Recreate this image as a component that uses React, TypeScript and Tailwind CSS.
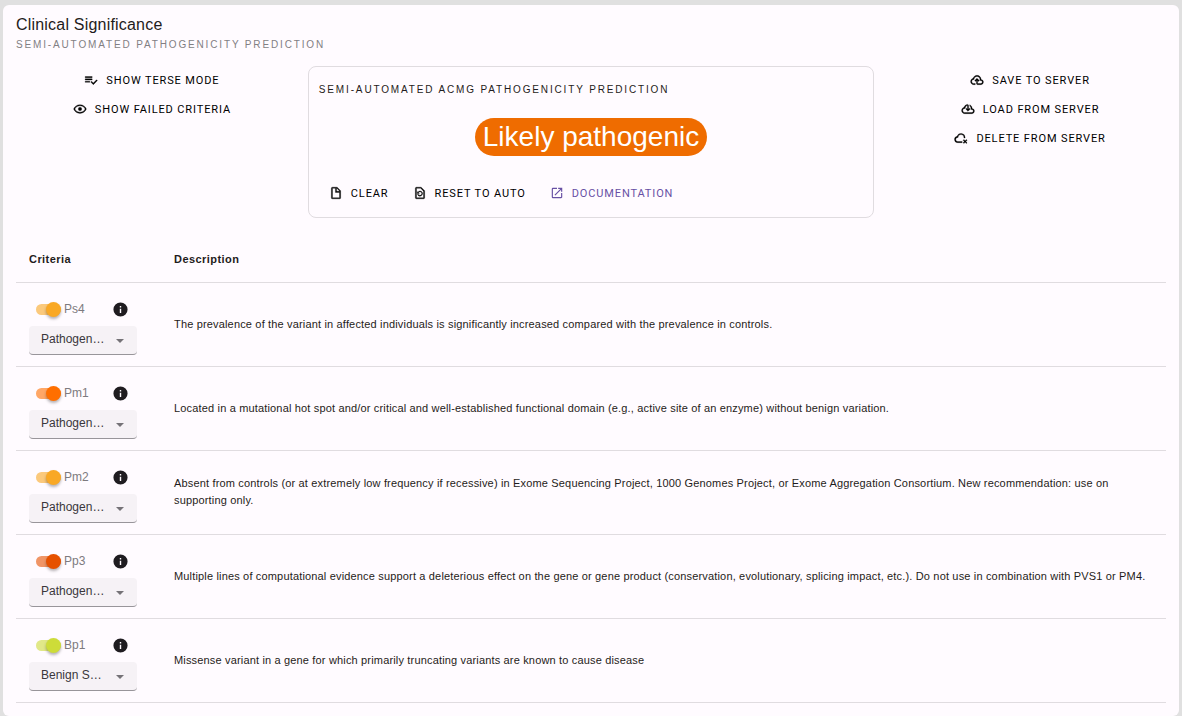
import type { ReactNode } from "react";

const icons = {
  terse: "M14 10H2v2h12v-2m0-4H2v2h12V6M2 16h8v-2H2v2m19.5-4.5L23 13l-6.99 7-4.51-4.5L13 14l3.01 3 5.49-5.5Z",
  eye: "M12 9a3 3 0 0 1 3 3 3 3 0 0 1-3 3 3 3 0 0 1-3-3 3 3 0 0 1 3-3m0-4.5c5 0 9.27 3.11 11 7.5-1.73 4.39-6 7.5-11 7.5S2.73 16.39 1 12c1.73-4.39 6-7.5 11-7.5M3.18 12a9.821 9.821 0 0 0 17.64 0 9.821 9.821 0 0 0-17.64 0Z",
  file: "M13 9h5.5L13 3.5V9M6 2h8l6 6v12a2 2 0 0 1-2 2H6a2 2 0 0 1-2-2V4a2 2 0 0 1 2-2m0 2v16h12v-9h-7V4H6Z",
  restore: "M14 2H6c-1.1 0-2 .9-2 2v16c0 1.1.89 2 2 2h12c1.1 0 2-.9 2-2V8l-6-6zm4 18H6V4h7.17L18 8.83V20zM8.45 10.57 7.28 9.4V13h3.6l-1.44-1.44C9.96 10.73 10.88 10 12 10c1.66 0 3 1.34 3 3s-1.34 3-3 3c-1.31 0-2.43-.84-2.83-2H7.6c.43 2 2.25 3.5 4.4 3.5 2.48 0 4.5-2.02 4.5-4.5S14.48 8.5 12 8.5c-1.52 0-2.79.82-3.55 2.07z",
  open: "M19 19H5V5h7V3H5a2 2 0 0 0-2 2v14a2 2 0 0 0 2 2h14c1.1 0 2-.9 2-2v-7h-2v7zM14 3v2h3.59l-9.83 9.83 1.41 1.41L19 6.41V10h2V3h-7z",
  upload: "M6.5 20Q4.22 20 2.61 18.43 1 16.85 1 14.58 1 12.63 2.17 11.1 3.35 9.57 5.25 9.15 5.88 6.85 7.75 5.43 9.63 4 12 4 14.93 4 16.96 6.04 19 8.07 19 11 20.73 11.2 21.86 12.5 23 13.78 23 15.5 23 17.38 21.69 18.69 20.38 20 18.5 20H13Q12.18 20 11.59 19.41 11 18.83 11 18V12.85L9.4 14.4 8 13 12 9 16 13 14.6 14.4 13 12.85V18H18.5Q19.55 18 20.27 17.27 21 16.55 21 15.5 21 14.45 20.27 13.73 19.55 13 18.5 13H17V11Q17 8.93 15.54 7.46 14.08 6 12 6 9.93 6 8.46 7.46 7 8.93 7 11H6.5Q5.05 11 4.03 12.03 3 13.05 3 14.5 3 15.95 4.03 17 5.05 18 6.5 18H9V20Z",
  download: "M6.5 20Q4.22 20 2.61 18.43 1 16.85 1 14.58 1 12.63 2.17 11.1 3.35 9.57 5.25 9.15 5.68 7.35 7.38 5.73 9.07 4.1 11 4.1 11.83 4.1 12.41 4.69 13 5.28 13 6.1V12.15L14.6 10.6 16 12 12 16 8 12 9.4 10.6 11 12.15V6.1Q9.1 6.45 8.05 7.94 7 9.43 7 11H6.5Q5.05 11 4.03 12.03 3 13.05 3 14.5 3 15.95 4.03 17 5.05 18 6.5 18H18.5Q19.55 18 20.27 17.27 21 16.55 21 15.5 21 14.45 20.27 13.73 19.55 13 18.5 13H17V11Q17 9.8 16.45 8.76 15.9 7.73 15 7V4.68Q16.85 5.55 17.93 7.26 19 9 19 11 20.73 11.2 21.86 12.5 23 13.78 23 15.5 23 17.38 21.69 18.69 20.38 20 18.5 20Z",
  remove: "M6.5 20A5.5 5.5 0 0 1 5.3 9.1 7 7 0 0 1 19 11v1h-2v-1A5 5 0 0 0 7 11h-.5a3.5 3.5 0 0 0 0 7H14v2ZM16.9 14.5 19 16.6l2.1-2.1 1.4 1.4-2.1 2.1 2.1 2.1-1.4 1.4-2.1-2.1-2.1 2.1-1.4-1.4 2.1-2.1-2.1-2.1Z",
  info: "M13 9h-2V7h2m0 10h-2v-6h2m-1-9A10 10 0 0 0 2 12a10 10 0 0 0 10 10 10 10 0 0 0 10-10A10 10 0 0 0 12 2Z",
};

function Icon({ path, className = "size-3.5" }: { path: string; className?: string }) {
  return (
    <svg
      viewBox="0 0 24 24"
      fill="currentColor"
      aria-hidden="true"
      className={`shrink-0 ${className}`}
    >
      <path d={path} />
    </svg>
  );
}

const actionClass =
  "flex h-7 items-center gap-2 px-2.5 font-[Roboto,Arial,sans-serif] text-[11px] leading-4 tracking-[0.08em] uppercase";

function Action({ icon, children }: { icon: string; children: ReactNode }) {
  return (
    <button type="button" className={`${actionClass} text-black`}>
      <Icon path={icon} className="size-3.5 stroke-current stroke-[0.5]" />
      <span className="pt-0.5">{children}</span>
    </button>
  );
}

const criteria = [
  { name: "Ps4", strength: "Pathogenic Strong", track: "bg-[#f9a825]/60", thumb: "bg-[#f9a825]", text: "The prevalence of the variant in affected individuals is significantly increased compared with the prevalence in controls." },
  { name: "Pm1", strength: "Pathogenic Moderate", track: "bg-[#ff6f00]/60", thumb: "bg-[#ff6f00]", text: "Located in a mutational hot spot and/or critical and well-established functional domain (e.g., active site of an enzyme) without benign variation." },
  { name: "Pm2", strength: "Pathogenic Supporting", track: "bg-[#f9a825]/60", thumb: "bg-[#f9a825]", text: "Absent from controls (or at extremely low frequency if recessive) in Exome Sequencing Project, 1000 Genomes Project, or Exome Aggregation Consortium. New recommendation: use on supporting only." },
  { name: "Pp3", strength: "Pathogenic Supporting", track: "bg-[#e65100]/60", thumb: "bg-[#e65100]", text: "Multiple lines of computational evidence support a deleterious effect on the gene or gene product (conservation, evolutionary, splicing impact, etc.). Do not use in combination with PVS1 or PM4." },
  { name: "Bp1", strength: "Benign Supporting", track: "bg-[#cddc39]/60", thumb: "bg-[#cddc39]", text: "Missense variant in a gene for which primarily truncating variants are known to cause disease" },
];

export default function App() {
  return (
    <div className="min-h-screen bg-[#e0e0e0] px-[3px] pt-[5px] font-['Liberation_Sans',Arial,sans-serif] text-[#1f1c20]">
      <main className="rounded-md bg-[#fffbff] px-[13px] pt-2 pb-[13px]">
        <h1 className="text-base leading-6 tracking-[0.0125em]">Clinical Significance</h1>
        <p className="text-[10px] leading-4 tracking-[0.185em] text-[#827f83] uppercase">Semi-automated Pathogenicity Prediction</p>
        <div className="mt-[13px] grid grid-cols-[12fr_25fr_12fr] gap-5">
          <div className="flex flex-col items-center gap-px">
            <Action icon={icons.terse}>Show terse mode</Action>
            <Action icon={icons.eye}>Show failed criteria</Action>
          </div>
          <section className="rounded-lg border border-[#e0dce0] px-2.5 pt-[17px] pb-2.5">
            <h2 className="text-[10px] leading-3 tracking-[0.185em] uppercase">Semi-automated ACMG Pathogenicity Prediction</h2>
            <div className="mt-[22px] flex justify-center">
              <span className="rounded-full bg-[#ef6c00] px-2 text-[28px] leading-[38px] text-white">Likely pathogenic</span>
            </div>
            <div className="mt-[23px] flex gap-1">
              <Action icon={icons.file}>Clear</Action>
              <Action icon={icons.restore}>Reset to auto</Action>
              <a href="#documentation" className={`${actionClass} text-[#6750a4]`}>
                <Icon path={icons.open} />
                <span className="pt-0.5">Documentation</span>
              </a>
            </div>
          </section>
          <div className="flex flex-col items-center gap-px">
            <Action icon={icons.upload}>Save to server</Action>
            <Action icon={icons.download}>Load from server</Action>
            <Action icon={icons.remove}>Delete from server</Action>
          </div>
        </div>
        <table className="mt-5 w-full border-collapse text-left">
          <thead>
            <tr className="h-11 border-b border-[#e0dce0] text-[11px] leading-4 tracking-[0.04em]">
              <th scope="col" className="w-[145px] px-[13px] pb-0.5">Criteria</th>
              <th scope="col" className="px-[13px] pb-0.5">Description</th>
            </tr>
          </thead>
          <tbody>
            {criteria.map((c) => (
              <tr key={c.name} className="border-b border-[#e0dce0]">
                <td className="px-[13px] pt-[15px] pb-[11px]">
                  <div className="flex h-6 w-[108px] items-center pr-2 pl-[7px]">
                    <label className="flex items-center gap-[3px] text-xs leading-4 text-[#7d7a7e]">
                      <span className="relative flex h-[15px] w-[25px] items-center">
                        <input type="checkbox" role="switch" defaultChecked className={`h-[11px] w-full appearance-none rounded-full ${c.track}`} />
                        <span className={`pointer-events-none absolute top-0 right-0 size-[15px] rounded-full shadow-[0_2px_3px_rgba(0,0,0,0.3)] ${c.thumb}`} />
                      </span>
                      <span className="pb-0.5">{c.name}</span>
                    </label>
                    <button type="button" aria-label={`About ${c.name}`} className="ml-auto">
                      <Icon path={icons.info} className="size-[17px]" />
                    </button>
                  </div>
                  <div className="relative mt-1 w-[108px]">
                    <select
                      aria-label={`${c.name} strength`}
                      className="block h-[29px] w-full appearance-none overflow-hidden rounded-[4px] border-b border-[#98959a] bg-[#f6f2f6] pr-[30px] pb-px pl-3 text-xs leading-4 text-ellipsis text-[#3a373b]"
                    >
                      <option>{c.strength}</option>
                    </select>
                    <svg viewBox="0 0 8 4" aria-hidden="true" className="pointer-events-none absolute top-[13px] right-[13px] h-1 w-2 fill-[#757277]">
                      <path d="M0 0h8L4 4Z" />
                    </svg>
                  </div>
                </td>
                <td className="px-[13px] text-[11px] leading-[17px] tracking-[0.015em]">{c.text}</td>
              </tr>
            ))}
          </tbody>
        </table>
      </main>
    </div>
  );
}
